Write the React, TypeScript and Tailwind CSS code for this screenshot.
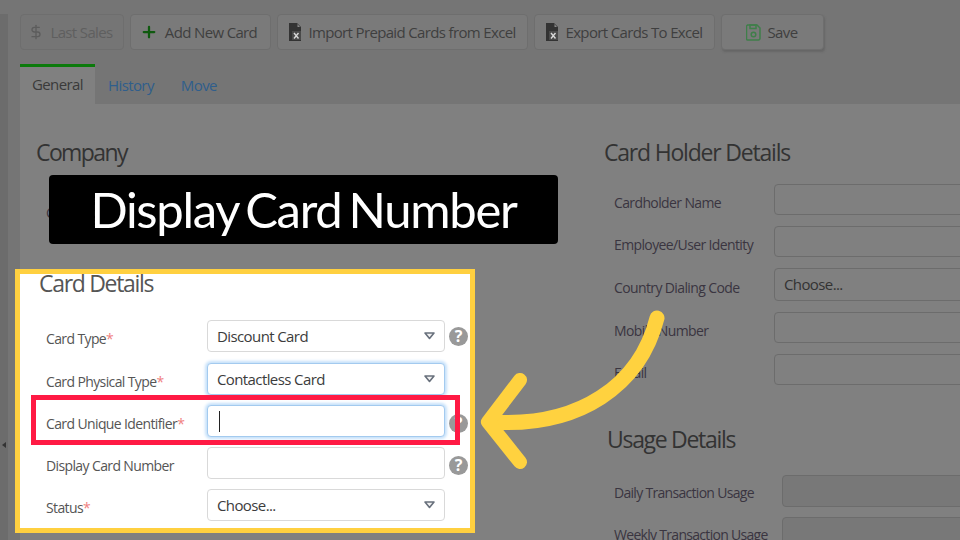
import { DollarSign, Plus } from "lucide-react"

const uiFont = { fontFamily: '"Open Sans", sans-serif' }

function ToolButton({ icon, label, w, dim }: { icon: React.ReactNode; label: string; w: string; dim?: boolean }) {
  return (
    <div className={`${w} h-9 shrink-0 rounded-sm border border-[#6e6e6e] flex items-center justify-center gap-[7px] text-[15px] tracking-[-0.65px] ${dim ? "text-[#5f5f5f] bg-[#757575]" : "text-[#3f3f3f] bg-[#7a7a7a]"}`}>
      {icon}
      <span>{label}</span>
    </div>
  )
}

function ExcelIcon() {
  return (
    <svg width="12" height="18" viewBox="0 0 12 18">
      <path d="M0 0h8l4 4v14H0z" fill="#333" />
      <path d="M8.5 1l2.5 3H8.5z" fill="#8a8a8a" />
      <rect x="3" y="8" width="9" height="9" fill="#4a4a4a" />
      <path d="M5 10l4.5 5.5M9.5 10L5 15.5" stroke="#d8d8d8" strokeWidth="1.4" />
    </svg>
  )
}

function SaveIcon() {
  return (
    <svg width="15" height="17" viewBox="0 0 15 17" fill="none" stroke="#3f7f4a" strokeWidth="1.5">
      <path d="M1.5 1h9.5l3 3v10.5a1.5 1.5 0 0 1-1.5 1.5h-11a1 1 0 0 1-1-1V2z" />
      <rect x="4" y="1" width="6" height="3.5" />
      <circle cx="7.5" cy="10.5" r="2.3" />
    </svg>
  )
}

function GrayField({ label, h = "h-[31px]", children }: { label: string; h?: string; children?: React.ReactNode }) {
  return (
    <div className="flex items-center">
      <div className="w-[160px] shrink-0 pt-1.5 text-sm text-[#3a3540] tracking-[-0.62px]">{label}</div>
      <div className={`w-[200px] ${h} shrink-0 rounded-sm border border-[#6c6c6c] flex items-center pl-[9px] text-[15px] tracking-[-0.6px] text-[#333]`}>{children}</div>
    </div>
  )
}

function Caret() {
  return (
    <svg width="11" height="8" viewBox="0 0 11 8" className="absolute right-[9px] top-1/2 -translate-y-1/2">
      <path d="M1 1h9L5.5 6.5z" fill="#f2f2f2" stroke="#68707c" strokeWidth="1.6" strokeLinejoin="round" />
    </svg>
  )
}

function CardRow({ label, req, value, select, focus, help, helpLow, cursor, rowClass }: { label: string; req?: boolean; value?: string; select?: boolean; focus?: boolean; help?: boolean; helpLow?: boolean; cursor?: boolean; rowClass: string }) {
  return (
    <div className={`flex items-center ${rowClass}`}>
      <div className="w-[161px] shrink-0 pt-1.5 text-sm text-[#555] tracking-[-0.62px]">
        {label}
        {req && <span className="text-[#f08080]">*</span>}
      </div>
      <div className={`relative w-[238px] h-full shrink-0 rounded-sm bg-white flex items-center pl-[9px] text-[15px] tracking-[-0.6px] text-[#3c3c3c] border ${focus ? "border-[#a3caef] shadow-[0_0_3px_2px_#c6e1fa]" : "border-[#d9d9d9]"}`}>
        {cursor && <span className="w-px h-[21px] ml-0.5 bg-[#222]" />}
        {value}
        {select && <Caret />}
      </div>
      <div className="w-[4px] shrink-0" />
      {help && (
        <div className={`w-[19px] h-[19px] shrink-0 rounded-full bg-[#999] text-white text-base font-bold leading-[19px] text-center ${helpLow ? "mt-1" : ""}`}>?</div>
      )}
    </div>
  )
}

export default function App() {
  return (
    <div className="relative w-[960px] h-[540px] overflow-hidden bg-[#757575] flex" style={uiFont}>
      <div className="w-2 shrink-0 bg-[#6c6c6c] mt-[14px]" />
      <div className="flex-1 min-w-0 pl-3 pt-[14px]">
        <div className="flex gap-1.5">
          <ToolButton dim w="w-[104px] pr-1" icon={<DollarSign size={16} strokeWidth={2} className="text-[#5c5c5c]" />} label="Last Sales" />
          <ToolButton w="w-[141px] pr-1" icon={<Plus size={18} strokeWidth={3} className="text-[#0f5a0f]" />} label="Add New Card" />
          <ToolButton w="w-[251px]" icon={<ExcelIcon />} label="Import Prepaid Cards from Excel" />
          <ToolButton w="w-[181px]" icon={<ExcelIcon />} label="Export Cards To Excel" />
          <div className="w-[103px] h-9 shrink-0 rounded-sm border border-[#6e6e6e] bg-[#7a7a7a] shadow-[1px_2px_2px_#666] flex items-center justify-center gap-[7px] pr-0.5 text-[15px] tracking-[-0.65px] text-[#3f3f3f]">
            <SaveIcon />
            <span>Save</span>
          </div>
        </div>

        <div className="flex mt-[14px] h-10 text-[15px] tracking-[-0.6px]">
          <div className="w-[75px] border-t-[3px] border-[#0b7a0b] bg-[#808080] pt-1.5 text-[#3a3a3a] text-center">General</div>
          <div className="pl-[13px] pt-[10px] text-[#2f5e8c]">History</div>
          <div className="pl-[27px] pt-[10px] text-[#2f5e8c]">Move</div>
        </div>

        <div className="bg-[#808080] h-[436px] flex">
          <div className="w-[584px] shrink-0 pl-4 pt-[31px]">
            <div className="text-[23px] text-[#333] leading-[34px] tracking-[-1.6px]">Company</div>
          </div>
          <div className="flex-1 min-w-0 pt-[31px]">
            <div className="text-[23px] text-[#333] leading-[34px] tracking-[-1.2px]">Card Holder Details</div>
            <div className="pl-2.5 mt-[15px] flex flex-col gap-[11px]">
              <GrayField label="Cardholder Name" />
              <GrayField label="Employee/User Identity" />
              <GrayField label="Country Dialing Code" h="h-[33px]">Choose...</GrayField>
              <GrayField label="Mobile Number" />
              <GrayField label="Email" />
            </div>
            <div className="text-[23px] text-[#333] leading-[34px] tracking-[-1.3px] pl-[3px] mt-[37px]">Usage Details</div>
            <div className="pl-2.5 mt-[19px] flex flex-col gap-[10px]">
              <div className="flex items-center">
                <div className="w-[168px] shrink-0 pt-1 text-sm text-[#3a3540] tracking-[-0.7px]">Daily Transaction Usage</div>
                <div className="w-[200px] h-8 shrink-0 rounded-sm border border-[#6c6c6c] bg-[#787878]" />
              </div>
              <div className="flex items-center">
                <div className="w-[168px] shrink-0 pt-1 text-sm text-[#3a3540] tracking-[-0.7px]">Weekly Transaction Usage</div>
                <div className="w-[200px] h-8 shrink-0 rounded-sm border border-[#6c6c6c] bg-[#787878]" />
              </div>
            </div>
          </div>
        </div>
      </div>

      {/* sidebar collapse arrow */}
      <div className="absolute left-[2px] top-[442px] w-0 h-0 border-y-[3px] border-y-transparent border-r-[4px] border-r-[#333]" />

      {/* a "C" peeking out from under the title badge */}
      <div className="absolute left-[46px] top-[203px] text-sm text-[#3a3540]">C</div>

      {/* title badge */}
      <div className="absolute left-[49px] top-[175px] w-[509px] h-[69px] rounded-[4px] bg-black text-white flex items-center justify-center text-[49px] tracking-[-1.3px] [word-spacing:-4px]" style={{ fontFamily: "Lato, sans-serif" }}>
        Display Card Number
      </div>

      {/* highlighted card details */}
      <div className="absolute left-[15px] top-[269px] w-[460px] h-[264px] border-[5px] border-[#ffd040] bg-white pl-[19px]">
        <div className="text-[23px] text-[#555] leading-[28px] tracking-[-1.3px] -mt-[5px]">Card Details</div>
        <div className="pl-[7px] mt-[23px]">
          <CardRow rowClass="h-8 mb-[11px]" label="Card Type" req select value="Discount Card" help />
          <CardRow rowClass="h-8 mb-[10px]" label="Card Physical Type" req select focus value="Contactless Card" />
          <CardRow rowClass="h-8 mb-[10px]" label="Card Unique Identifier" req focus cursor help helpLow />
          <CardRow rowClass="h-8 mb-[10px]" label="Display Card Number" help helpLow />
          <CardRow rowClass="h-8" label="Status" req select value="Choose..." />
        </div>
      </div>

      {/* red highlight */}
      <div className="absolute left-[31px] top-[395px] w-[429px] h-[50px] border-[5px] border-[#ff1a44]" />

      {/* arrow */}
      <svg className="absolute left-[480px] top-[300px]" width="190" height="180" viewBox="0 0 190 180" fill="none">
        <path d="M177 18C160 85 100 128 10 122" stroke="#ffd23f" strokeWidth="15" strokeLinecap="round" />
        <path d="M40 80L8 122L40 162" stroke="#ffd23f" strokeWidth="14" strokeLinecap="round" strokeLinejoin="round" />
      </svg>
    </div>
  )
}
